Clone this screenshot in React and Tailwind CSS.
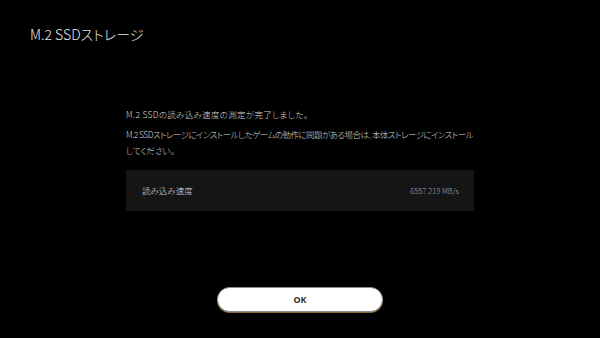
export default function App() {
  const jp = "font-['Noto_Sans_CJK_JP','Noto_Sans',sans-serif] [font-feature-settings:'palt']";
  return (
    <div className={`w-[600px] h-[338px] bg-black flex flex-col text-[#d8d8d8] font-light ${jp}`}>
      <div className="pt-[25px] pl-[30px] text-[14px] leading-[18px] text-[#e6e6e6]">M.2 SSDストレージ</div>
      <div className="mx-auto w-[348px] mt-[63px] flex flex-col">
        <p className="text-[8.5px] leading-[16px] tracking-[0.3px]">M.2 SSDの読み込み速度の測定が完了しました。</p>
        <p className="mt-[4px] text-[8.5px] leading-[16px] whitespace-nowrap">
          <span className="tracking-[-0.55px]">M.2 SSDストレージにインストールしたゲームの動作に問題がある場合は、本体ストレージにインストール</span>
          <br />
          してください。
        </p>
        <div className="mt-[12px] h-[41px] bg-[#151515] flex items-center justify-between pl-[16px] pr-[15px]">
          <span className="text-[8.5px] text-[#dcdcdc]">読み込み速度</span>
          <span className="text-[7.5px] text-[#a8a8a8]">6557.219 MB/s</span>
        </div>
      </div>
      <div className="mt-auto mb-[26px] mx-auto w-[166px] h-[25px] rounded-full bg-white border border-[#8a8a8a] shadow-[0_1px_0_#8a6a40] flex items-center justify-center">
        <span className="text-[9px] font-bold text-[#333] font-['Noto_Sans',sans-serif]">OK</span>
      </div>
    </div>
  );
}
